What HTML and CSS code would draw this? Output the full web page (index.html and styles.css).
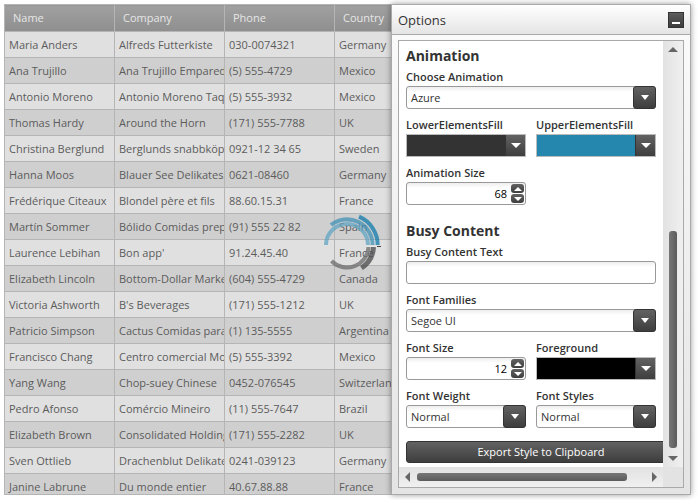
FILE: index.html
```html
<!DOCTYPE html>
<html lang="en">
<head>
<meta charset="utf-8">
<title>Busy Indicator Options</title>
<link rel="stylesheet" href="styles.css">
</head>
<body>
<main class="stage">
  <section class="grid-area">
    <table class="grid">
      <thead><tr><th>Name</th><th>Company</th><th>Phone</th><th>Country</th></tr></thead>
      <tbody>
        <tr><td>Maria Anders</td><td>Alfreds Futterkiste</td><td>030-0074321</td><td>Germany</td></tr>
        <tr><td>Ana Trujillo</td><td>Ana Trujillo Empareda</td><td>(5) 555-4729</td><td>Mexico</td></tr>
        <tr><td>Antonio Moreno</td><td>Antonio Moreno Taq</td><td>(5) 555-3932</td><td>Mexico</td></tr>
        <tr><td>Thomas Hardy</td><td>Around the Horn</td><td>(171) 555-7788</td><td>UK</td></tr>
        <tr><td>Christina Berglund</td><td>Berglunds snabbköp</td><td>0921-12 34 65</td><td>Sweden</td></tr>
        <tr><td>Hanna Moos</td><td>Blauer See Delikatess</td><td>0621-08460</td><td>Germany</td></tr>
        <tr><td>Frédérique Citeaux</td><td>Blondel père et fils</td><td>88.60.15.31</td><td>France</td></tr>
        <tr><td>Martín Sommer</td><td>Bólido Comidas prep</td><td>(91) 555 22 82</td><td>Spain</td></tr>
        <tr><td>Laurence Lebihan</td><td>Bon app'</td><td>91.24.45.40</td><td>France</td></tr>
        <tr><td>Elizabeth Lincoln</td><td>Bottom-Dollar Marke</td><td>(604) 555-4729</td><td>Canada</td></tr>
        <tr><td>Victoria Ashworth</td><td>B's Beverages</td><td>(171) 555-1212</td><td>UK</td></tr>
        <tr><td>Patricio Simpson</td><td>Cactus Comidas para</td><td>(1) 135-5555</td><td>Argentina</td></tr>
        <tr><td>Francisco Chang</td><td>Centro comercial Mo</td><td>(5) 555-3392</td><td>Mexico</td></tr>
        <tr><td>Yang Wang</td><td>Chop-suey Chinese</td><td>0452-076545</td><td>Switzerland</td></tr>
        <tr><td>Pedro Afonso</td><td>Comércio Mineiro</td><td>(11) 555-7647</td><td>Brazil</td></tr>
        <tr><td>Elizabeth Brown</td><td>Consolidated Holding</td><td>(171) 555-2282</td><td>UK</td></tr>
        <tr><td>Sven Ottlieb</td><td>Drachenblut Delikate</td><td>0241-039123</td><td>Germany</td></tr>
        <tr><td>Janine Labrune</td><td>Du monde entier</td><td>40.67.88.88</td><td>France</td></tr>
      </tbody>
    </table>
    <svg class="busy" viewBox="-34 -34 68 68" fill="none" aria-hidden="true">
      <g opacity=".75">
        <path d="M-21 0A21 21 0 0 1 21 0" stroke="#62a6c4" stroke-width="4"/>
        <path d="M-16 -20A25.600 25.600 0 0 1 25.600 0" stroke="#4292b6" stroke-width="4"/>
        <path d="M12 -28.300A30.700 30.700 0 0 1 30.700 0" stroke="#0f7bab" stroke-width="4"/>
        <path d="M21.500 2A21.600 21.600 0 0 1 -15.500 16" stroke="#6c6c6c" stroke-width="4"/>
        <path d="M26.500 2A27 27 0 0 1 14.500 23" stroke="#484848" stroke-width="5"/>
      </g>
      <path d="M19 1.500h11" stroke="#e8e8e8"/>
      <path d="M30 1.500h4" stroke="#444"/>
    </svg>
  </section>

  <aside class="panel">
    <header class="panel-head">
      <h1>Options</h1>
      <button class="minimize" type="button" aria-label="Minimize"></button>
    </header>
    <div class="viewport">
      <form class="form">
        <h2>Animation</h2>
        <div class="field">
          <label for="anim">Choose Animation</label>
          <div class="combo"><select id="anim"><option>Azure</option></select><span class="drop"></span></div>
        </div>
        <div class="pair">
          <div class="field">
            <label for="lower">LowerElementsFill</label>
            <button class="color lower" id="lower" type="button"><span class="drop"></span></button>
          </div>
          <div class="field">
            <label for="upper">UpperElementsFill</label>
            <button class="color upper" id="upper" type="button"><span class="drop"></span></button>
          </div>
        </div>
        <div class="pair">
          <div class="field">
            <label for="size">Animation Size</label>
            <div class="spin"><input id="size" type="text" value="68"><span class="arrows"><button type="button" class="up" aria-label="Increase"></button><button type="button" class="down" aria-label="Decrease"></button></span></div>
          </div>
        </div>
        <h2 class="second">Busy Content</h2>
        <div class="field">
          <label for="text">Busy Content Text</label>
          <input class="text" id="text" type="text">
        </div>
        <div class="field">
          <label for="family">Font Families</label>
          <div class="combo"><select id="family"><option>Segoe UI</option></select><span class="drop"></span></div>
        </div>
        <div class="pair">
          <div class="field">
            <label for="fsize">Font Size</label>
            <div class="spin"><input id="fsize" type="text" value="12"><span class="arrows"><button type="button" class="up" aria-label="Increase"></button><button type="button" class="down" aria-label="Decrease"></button></span></div>
          </div>
          <div class="field">
            <label for="fore">Foreground</label>
            <button class="color fore" id="fore" type="button"><span class="drop"></span></button>
          </div>
        </div>
        <div class="pair">
          <div class="field">
            <label for="weight">Font Weight</label>
            <div class="combo"><select id="weight"><option>Normal</option></select><span class="drop"></span></div>
          </div>
          <div class="field">
            <label for="style">Font Styles</label>
            <div class="combo"><select id="style"><option>Normal</option></select><span class="drop"></span></div>
          </div>
        </div>
        <button class="export" type="button">Export Style to Clipboard</button>
      </form>
      <div class="vbar"><i class="tri t-up"></i><span class="vtrack"><span class="vthumb"></span></span><i class="tri t-down"></i></div>
      <div class="hbar"><i class="tri t-left"></i><span class="htrack"><span class="hthumb"></span></span><i class="tri t-right"></i></div>
    </div>
  </aside>
</main>
</body>
</html>
```
FILE: styles.css
```css
* { box-sizing: border-box; }
body {
  margin: 0;
  padding: 4px 9px 5px 4px;
  height: 100vh;
  background: #fff;
  color: #333;
  font: 11px/16px "Open Sans", "Noto Sans", sans-serif;
  overflow: hidden;
}
button, input, select { font: inherit; color: inherit; margin: 0; }
.stage { display: flex; height: 100%; }

.grid-area { position: relative; flex: 1; min-width: 0; overflow: hidden; border-bottom: 1px solid #b5b5b5; }
.grid { width: 441px; table-layout: fixed; border-collapse: collapse; }
.grid th, .grid td {
  height: 26px;
  padding: 0 0 0 4px;
  border: 1px solid #b5b5b5;
  text-align: left;
  white-space: nowrap;
  overflow: hidden;
}
.grid th { height: 27px; padding: 0 8px; font-weight: 400; color: #e6e6e6; background: linear-gradient(#a0a0a0, #8f8f8f); }
.grid td { color: #5c5c5c; background: #e0e0e0; }
.grid tr:nth-child(even) td { background: #cfcfcf; }
.busy { position: absolute; left: 309px; top: 207px; width: 68px; height: 68px; }

.panel {
  flex: 0 0 300px;
  display: flex;
  flex-direction: column;
  border: 1px solid #a9a9a9;
  background: linear-gradient(#fbfbfb, #e4e4e4);
  box-shadow: 0 0 6px rgba(0, 0, 0, .4);
  position: relative;
}
.panel-head {
  display: flex;
  align-items: center;
  justify-content: space-between;
  height: 30px;
  padding: 0 6px;
  border-bottom: 1px solid #a9a9a9;
  background: linear-gradient(#fff, #e4e4e4);
}
h1 { margin: 0; font-size: 13px; line-height: 20px; font-weight: 400; }
.minimize {
  display: flex; align-items: flex-end; justify-content: center;
  width: 16px; height: 16px; padding: 0 0 3px;
  border: 1px solid #333; background: linear-gradient(#5c5c5c, #3c3c3c);
}
.minimize::before { content: ""; width: 8px; height: 2px; background: #fff; }

.viewport {
  flex: 1;
  min-height: 0;
  margin: 6px;
  margin-top: 5px;
  display: grid;
  grid-template-columns: minmax(0, 1fr) 20px;
  grid-template-rows: minmax(0, 1fr) 20px;
  border: 1px solid #a9a9a9;
  background: #e3e3e3;
}
.form { padding: 5px 0 0 7px; background: #fff; overflow: hidden; }
h2 { margin: 0 0 3px; font-size: 14px; line-height: 20px; font-weight: 700; }
h2.second { margin-top: 8px; }
.field { margin: 0 7px 8px 0; }
label { display: block; height: 16px; margin-bottom: 1px; font-weight: 600; white-space: nowrap; }
.pair { display: grid; grid-template-columns: 120px 120px; gap: 10px; }
.pair .field { margin-right: 0; }

.drop {
  width: 23px;
  background: linear-gradient(#626262, #3e3e3e);
  display: flex; align-items: center; justify-content: center;
  pointer-events: none;
}
.drop::before { content: ""; border: 4px solid transparent; border-top: 5px solid #fff; border-bottom: 0; }
.combo { display: grid; grid-template-columns: 1fr 23px; height: 23px; }
.combo select {
  grid-area: 1 / 1 / 2 / 3;
  appearance: none;
  padding: 0 4px;
  border: 1px solid #999;
  border-radius: 3px;
  background: linear-gradient(#eee, #fff 5px);
}
.combo .drop { grid-area: 1 / 2; border: 1px solid #333; border-radius: 3px; }
.color { display: flex; justify-content: flex-end; width: 100%; height: 23px; padding: 0; border: 1px solid #bbb; }
.color .drop { width: 20px; height: 21px; border-left: 1px solid #333; }
.color .drop::before { border-width: 5px 5px 0; }
.lower { background: #333; }
.upper { background: #2586ae; }
.fore { background: #000; }
.spin { display: flex; height: 23px; padding: 1px; border: 1px solid #999; border-radius: 3px; background: linear-gradient(#eee, #fff 5px); }
.spin input { flex: 1; min-width: 0; padding: 0 4px; border: 0; background: none; text-align: right; color: #000; }
.arrows { display: grid; gap: 1px; width: 13px; }
.arrows button { display: flex; align-items: center; justify-content: center; padding: 0; border: 0; border-radius: 3px; background: linear-gradient(#626262, #3e3e3e); }
.arrows button::before { content: ""; border: 4px solid transparent; }
.arrows .up::before { border-top: 0; border-bottom-color: #fff; }
.arrows .down::before { border-bottom: 0; border-top-color: #fff; }
.text { display: block; width: 100%; height: 23px; border: 1px solid #999; border-radius: 3px; background: linear-gradient(#eee, #fff 5px); }
.export {
  width: 270px; height: 22px; padding: 0; margin-top: 5px;
  border: 1px solid #333; border-radius: 3px;
  background: linear-gradient(#626262, #3e3e3e); color: #fff;
}

.vbar, .hbar { display: flex; align-items: center; justify-content: space-between; background: linear-gradient(90deg, #e2e2e2, #f0f0f0); }
.vbar { flex-direction: column; padding: 6px 0; }
.hbar { padding: 0 6px; background: linear-gradient(#e2e2e2, #f0f0f0); }
.vtrack { flex: 1; display: flex; flex-direction: column; justify-content: flex-end; padding: 8px 0; }
.vthumb { width: 8px; height: 56%; border-radius: 3px; background: linear-gradient(90deg, #777, #5c5c5c); }
.htrack { flex: 1; padding: 0 7px; }
.hthumb { display: block; width: 92%; height: 8px; border-radius: 3px; background: linear-gradient(#777, #5c5c5c); }
.tri { border: 5px solid transparent; }
.t-up { border-top: 0; border-bottom-color: #666; }
.t-down { border-bottom: 0; border-top-color: #666; }
.t-left { border-left: 0; border-right-color: #666; }
.t-right { border-right: 0; border-left-color: #666; }
```
